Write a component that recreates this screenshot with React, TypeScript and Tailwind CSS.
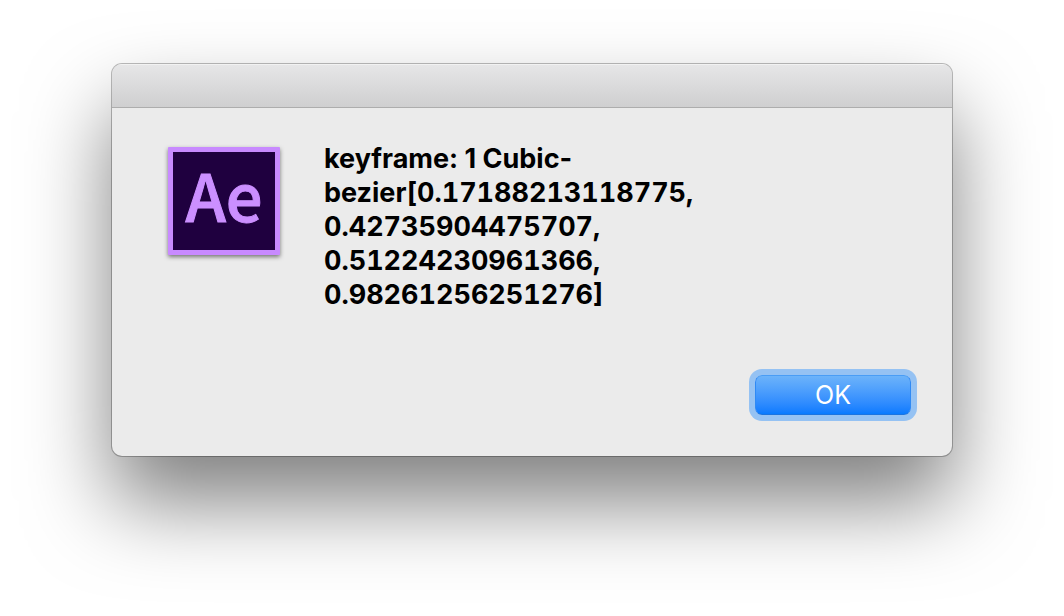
export default function App() {
  return (
    <main className="flex min-h-screen justify-center bg-white px-28 pt-16 pb-40 font-['Inter','Liberation_Sans',sans-serif]">
      <section
        role="dialog"
        aria-labelledby="alert-message"
        className="flex w-full flex-col self-start overflow-hidden rounded-[10px] bg-[#ebebeb] shadow-[0_0_0_1px_rgba(0,0,0,0.26),0_46px_84px_rgba(0,0,0,0.5)]"
      >
        <header className="h-11 border-t border-b border-t-[#f2f2f2] border-b-[#adadad] bg-linear-to-b from-[#e6e6e7] to-[#cfcfd0]" />
        <div className="flex gap-11 px-14 pt-[34px] pb-[63px]">
          <svg viewBox="0 0 112 108" role="img" aria-label="Ae" className="mt-[5px] h-27 w-28 shrink-0 overflow-visible drop-shadow-[0_2px_2px_rgba(0,0,0,0.5)]">
            <rect width="112" height="108" rx="1" fill="#c88aff" />
            <rect x="5" y="5" width="102" height="98" fill="#1f003f" />
            <text x="56" y="75" textAnchor="middle" fill="#cb8fff" stroke="#cb8fff" strokeWidth="1" fontFamily="'Noto Sans CJK SC', 'Noto Sans', sans-serif" fontSize="65" fontWeight="500">Ae</text>
          </svg>
          <p id="alert-message" className="w-96 text-[27px] leading-[34px] font-bold text-black">
            keyframe: 1 Cubic-<br />
            <span className="tabular-nums">
              bezier[0.17188213118775,<br />0.42735904475707,<br />0.51224230961366,<br />0.98261256251276]
            </span>
          </p>
        </div>
        <footer className="flex justify-end px-[41px] pb-[41px]">
          <button className="h-10 w-39 rounded-[7px] border border-t-[#4a9df5] border-x-[#2f8af5] border-b-[#1b74e0] bg-linear-to-b from-[#6cb3fa] to-[#067aff] text-[25px] leading-none text-white ring-[6px] ring-[#95c2f3]">OK</button>
        </footer>
      </section>
    </main>
  );
}
